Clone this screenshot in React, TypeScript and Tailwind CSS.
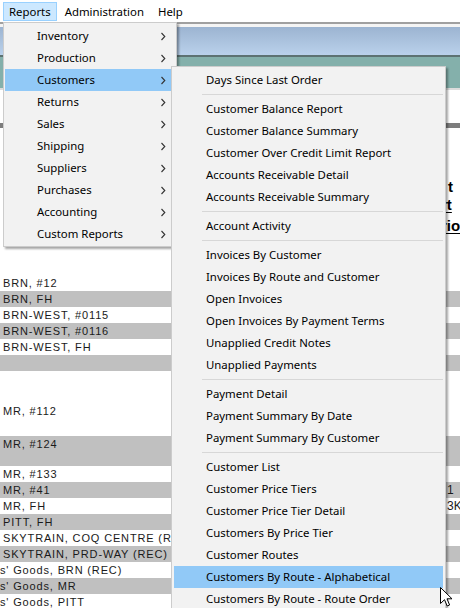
import React from "react";

const mainItems = [
  "Inventory",
  "Production",
  "Customers",
  "Returns",
  "Sales",
  "Shipping",
  "Suppliers",
  "Purchases",
  "Accounting",
  "Custom Reports",
];

const subItems: (string | null)[] = [
  "Days Since Last Order",
  null,
  "Customer Balance Report",
  "Customer Balance Summary",
  "Customer Over Credit Limit Report",
  "Accounts Receivable Detail",
  "Accounts Receivable Summary",
  null,
  "Account Activity",
  null,
  "Invoices By Customer",
  "Invoices By Route and Customer",
  "Open Invoices",
  "Open Invoices By Payment Terms",
  "Unapplied Credit Notes",
  "Unapplied Payments",
  null,
  "Payment Detail",
  "Payment Summary By Date",
  "Payment Summary By Customer",
  null,
  "Customer List",
  "Customer Price Tiers",
  "Customer Price Tier Detail",
  "Customers By Price Tier",
  "Customer Routes",
  "Customers By Route - Alphabetical",
  "Customers By Route - Route Order",
];

type Row = { text: string; gray: boolean; h: string; right?: string; pl?: string };

const rows: Row[] = [
  { text: "BRN, #12", gray: false, h: "h-[16px]" },
  { text: "BRN, FH", gray: true, h: "h-[16px]" },
  { text: "BRN-WEST, #0115", gray: false, h: "h-[16px]" },
  { text: "BRN-WEST, #0116", gray: true, h: "h-[16px]" },
  { text: "BRN-WEST, FH", gray: false, h: "h-[16px]" },
  { text: "", gray: true, h: "h-[16px]" },
  { text: "", gray: false, h: "h-[32px]" },
  { text: "MR, #112", gray: false, h: "h-[16px]" },
  { text: "", gray: false, h: "h-[17px]" },
  { text: "MR, #124", gray: true, h: "h-[30px]" },
  { text: "MR, #133", gray: false, h: "h-[16px]" },
  { text: "MR, #41", gray: true, h: "h-[16px]", right: "1" },
  { text: "MR, FH", gray: false, h: "h-[16px]", right: "3K8" },
  { text: "PITT, FH", gray: true, h: "h-[16px]" },
  { text: "SKYTRAIN, COQ CENTRE (REC)", gray: false, h: "h-[16px]" },
  { text: "SKYTRAIN, PRD-WAY (REC)", gray: true, h: "h-[16px]" },
  { text: "s' Goods, BRN (REC)", gray: false, h: "h-[16px]", pl: "pl-0" },
  { text: "s' Goods, MR", gray: true, h: "h-[16px]", pl: "pl-0" },
  { text: "s' Goods, PITT", gray: false, h: "h-[16px]", pl: "pl-0" },
];

function Chevron() {
  return (
    <svg width="6" height="9" viewBox="0 0 6 9" className="mr-[9px] shrink-0">
      <path d="M1.5 1 L4.8 4.5 L1.5 8" fill="none" stroke="#333" strokeWidth="1.1" />
    </svg>
  );
}

export default function App() {
  return (
    <div className="relative w-[460px] h-[608px] overflow-hidden bg-white text-black font-['Noto_Sans',sans-serif] text-[11.4px]">
      {/* Menu bar */}
      <div className="flex h-[22px] items-start pt-[2px] pl-[3px] bg-white">
        <div className="h-[19px] px-[5px] flex items-center border border-[#99d1ff] bg-[#cce8ff] leading-none pt-[1px]">
          Reports
        </div>
        <div className="h-[19px] pl-[8px] pr-[7px] flex items-center leading-none pt-[1px]">Administration</div>
        <div className="h-[19px] px-[7px] flex items-center leading-none pt-[1px]">Help</div>
      </div>

      {/* Header bands */}
      <div className="h-[2px] bg-[#a0a0a0]" />
      <div className="h-[3px] bg-[#f4f4f4]" />
      <div className="h-[28px] bg-gradient-to-b from-[#9cb4d1] to-[#bad1eb]" />
      <div className="h-[2px] bg-[#5d7272]" />
      <div className="h-[31px] bg-[#84b0ab]" />
      <div className="h-[2px] bg-[#dcdcdc]" />
      <div className="h-[33px] bg-white" />
      <div className="h-[5px] bg-[#7d7d7d]" />

      {/* Title area */}
      <div className="h-[147px] pt-[50px] font-['Liberation_Sans',sans-serif] font-bold text-[15px] text-black whitespace-nowrap">
        <div className="h-[18px] leading-[18px] pl-[448px]">t</div>
        <div className="h-[21px] leading-[18px] pl-[441px]">
          <span className="underline underline-offset-[2px]">rt</span>
        </div>
        <div className="h-[21px] leading-[18px] pl-[441px]">
          <span className="underline underline-offset-[2px]">rio</span>
        </div>
      </div>

      {/* Data rows */}
      <div className="font-['Liberation_Sans',sans-serif] text-[11px] tracking-[0.85px] text-[#1a1a1a]">
        {rows.map((r, i) => (
          <div
            key={i}
            className={`${r.h} ${r.gray ? "bg-[#c0c0c0]" : "bg-white"} flex items-start whitespace-nowrap relative`}
          >
            <div className={`${r.pl ?? "pl-[3px]"} h-[16px] leading-[16px] flex-1`}>{r.text}</div>
            {r.right && (
              <div className="absolute left-[447px] top-0 h-[16px] leading-[16px] tracking-normal text-[12px]">
                {r.right}
              </div>
            )}
          </div>
        ))}
      </div>

      {/* Main dropdown */}
      <div className="absolute left-[3px] top-[22px] w-[174px] border border-[#cccccc] bg-[#f2f2f2] pt-[2px] pb-[1px] px-[1px] shadow-[2px_2px_2px_rgba(0,0,0,0.35)]">
        {mainItems.map((m) => (
          <div
            key={m}
            className={`h-[22px] flex items-center ${m === "Customers" ? "bg-[#91c9f7]" : ""}`}
          >
            <span className="flex-1 pl-[32px] leading-none">{m}</span>
            <Chevron />
          </div>
        ))}
      </div>

      {/* Submenu */}
      <div className="absolute left-[171px] top-[66px] w-[275px] border border-[#cccccc] bg-[#f2f2f2] pt-[2px] px-[2px] shadow-[2px_2px_2px_rgba(0,0,0,0.35)]">
        {subItems.map((s, i) =>
          s === null ? (
            <div key={i} className="h-[7px] flex items-center pl-[28px]">
              <div className="h-px w-full bg-[#d7d7d7]" />
            </div>
          ) : (
            <div
              key={i}
              className={`h-[22px] flex items-center pl-[32px] whitespace-nowrap leading-none ${
                s === "Customers By Route - Alphabetical" ? "bg-[#91c9f7]" : ""
              }`}
            >
              {s}
            </div>
          )
        )}
      </div>

      {/* Mouse cursor */}
      <svg
        className="absolute left-[440px] top-[587px]"
        width="14"
        height="21"
        viewBox="0 0 14 21"
      >
        <path
          d="M0.5 0.5 L0.5 16.5 L4.5 12.7 L7.2 19 L9.6 18 L7 11.8 L12 11.8 Z"
          fill="#fff"
          stroke="#000"
          strokeWidth="1"
          strokeLinejoin="miter"
        />
      </svg>
    </div>
  );
}
